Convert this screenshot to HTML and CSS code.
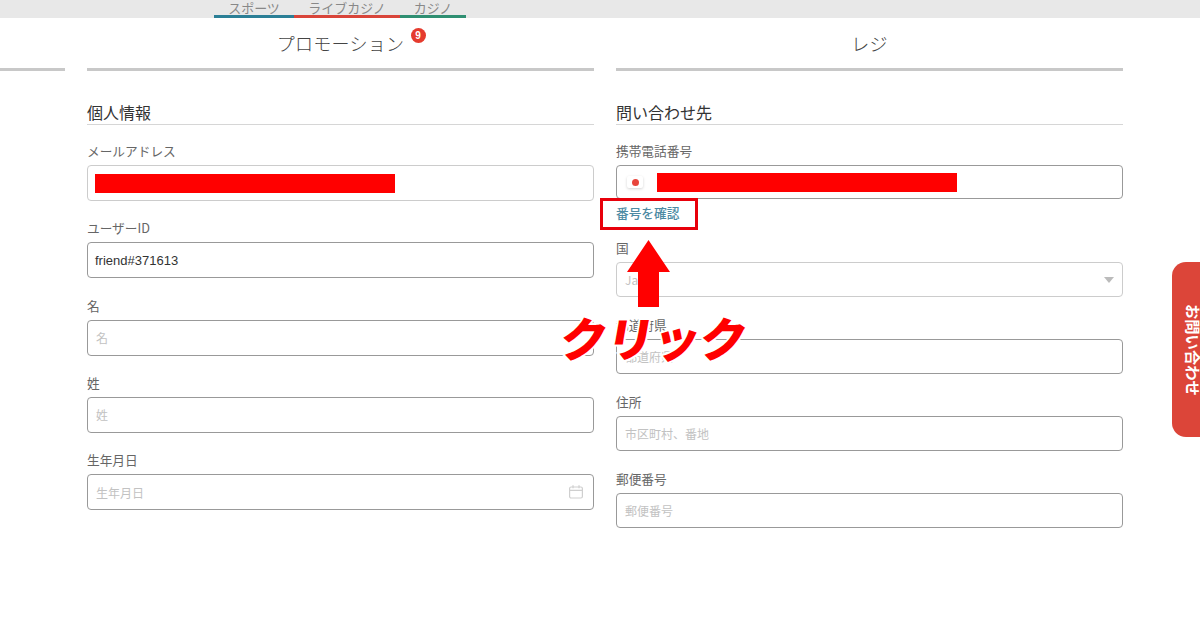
FILE: index.html
```
<!DOCTYPE html>
<html lang="ja">
<head>
<meta charset="utf-8">
<title>個人情報</title>
<link rel="stylesheet" href="styles.css">
</head>
<body>
<div class="topbar">
  <div class="tab tab-sports">スポーツ</div>
  <div class="tab tab-live">ライブカジノ</div>
  <div class="tab tab-casino">カジノ</div>
</div>
<main class="grid">
  <div class="stub"></div>
  <section class="col col-left">
    <h2 class="col-title"><span class="title-wrap">プロモーション<span class="badge">9</span></span></h2>
    <h3 class="sec-title">個人情報</h3>
    <div class="field">
      <label class="label">メールアドレス</label>
      <div class="input light"><span class="redact"></span></div>
    </div>
    <div class="field">
      <label class="label">ユーザーID</label>
      <div class="input value">friend#371613</div>
    </div>
    <div class="field">
      <label class="label">名</label>
      <div class="input ph">名</div>
    </div>
    <div class="field">
      <label class="label">姓</label>
      <div class="input ph">姓</div>
    </div>
    <div class="field">
      <label class="label">生年月日</label>
      <div class="input ph between">生年月日
        <svg class="cal" width="16" height="16" viewBox="0 0 16 16" fill="none" stroke="#cfcfcf" stroke-width="1.2"><rect x="1.6" y="3" width="12.8" height="11" rx="1.5"/><path d="M1.6 6.4h12.8M5 1.2v3M11 1.2v3"/></svg>
      </div>
    </div>
  </section>
  <section class="col col-right">
    <h2 class="col-title">レジ</h2>
    <h3 class="sec-title">問い合わせ先</h3>
    <div class="field phone">
      <label class="label">携帯電話番号</label>
      <div class="input">
        <span class="flag"><span class="sun"></span></span>
        <span class="redact"></span>
      </div>
      <a class="verify">番号を確認</a>
    </div>
    <div class="field">
      <label class="label">国</label>
      <div class="input light ph between">Japan<span class="caret"></span></div>
    </div>
    <div class="field">
      <label class="label">都道府県</label>
      <div class="input ph">都道府県</div>
    </div>
    <div class="field">
      <label class="label">住所</label>
      <div class="input ph">市区町村、番地</div>
    </div>
    <div class="field">
      <label class="label">郵便番号</label>
      <div class="input ph">郵便番号</div>
    </div>
  </section>
</main>
<aside class="side-tab"><span>お問い合わせ</span></aside>
<div class="note-box"></div>
<svg class="note-arrow" width="43" height="67" viewBox="0 0 43 67"><path d="M21.5 0L43 32H32V67H11V32H0Z" fill="#ff0000"/></svg>
<div class="note-text">クリック</div>
</body>
</html>
```
FILE: styles.css
```
* { box-sizing: border-box; }
html, body { margin: 0; padding: 0; }
body {
  width: 1200px;
  height: 630px;
  overflow: hidden;
  position: relative;
  background: #fff;
  font-family: "Noto Sans CJK JP", "Noto Sans", sans-serif;
  color: #666;
}
.topbar {
  height: 18px;
  background: #e8e8e8;
  display: flex;
  padding-left: 214px;
  overflow: hidden;
}
.tab {
  height: 18px;
  font-size: 13px;
  line-height: 15px;
  color: #888;
  text-align: center;
  border-bottom: 3px solid;
  overflow: hidden;
}
.tab-sports { width: 80px; border-color: #2b7f96; }
.tab-live { width: 106px; border-color: #d9453a; }
.tab-casino { width: 66px; border-color: #2f8f72; }
.grid {
  display: grid;
  grid-template-columns: 65px 507px 507px;
  column-gap: 22px;
}
.stub { height: 53px; border-bottom: 3px solid #c8c8c8; }
.col-title {
  margin: 0;
  height: 53px;
  border-bottom: 3px solid #c8c8c8;
  font-size: 18px;
  font-weight: 300;
  letter-spacing: 0.3px;
  line-height: 50px;
  text-align: center;
  color: #444;
}
.title-wrap { position: relative; display: inline-block; }
.badge {
  position: absolute;
  left: 134px;
  top: 10px;
  width: 15px;
  height: 15px;
  border-radius: 50%;
  background: #e53b2e;
  color: #fff;
  font: bold 10px/15px "Liberation Sans", sans-serif;
  letter-spacing: 0;
  text-align: center;
}
.sec-title {
  margin: 32px 0 0;
  height: 22px;
  font-size: 16px;
  font-weight: 400;
  line-height: 19px;
  color: #333;
  border-bottom: 1px solid #d6d6d6;
}
.col-left .field { margin-top: 17.25px; }
.col-right .field { margin-top: 18px; }
.col .sec-title + .field { margin-top: 16px; }
.col .phone + .field { margin-top: 16px; }
.label {
  display: block;
  height: 19px;
  margin-bottom: 5px;
  font-size: 12.7px;
  line-height: 19px;
  color: #666;
}
.input {
  height: 35px;
  padding: 0 8px;
  border: 1px solid #999;
  border-radius: 4px;
  display: flex;
  align-items: center;
  background: #fff;
  font-size: 12px;
}
.col-left .input { height: 36px; }
.input.light { border-color: #ccc; }
.input.value {
  padding-left: 7px;
  color: #333;
  font-family: "Liberation Sans", sans-serif;
  font-size: 13px;
}
.input.ph { color: #c2c2c2; }
.between { justify-content: space-between; }
.redact { display: block; width: 300px; height: 19px; background: #ff0000; }
.col-left .redact { margin-left: -1px; }
.cal { display: block; margin-right: 1px; }
.caret {
  width: 0;
  height: 0;
  border-left: 5px solid transparent;
  border-right: 5px solid transparent;
  border-top: 6px solid #bbb;
}
.phone .input { height: 34px; padding-left: 10px; }
.flag {
  width: 16px;
  height: 12px;
  margin-right: 14px;
  background: #fff;
  border-radius: 2px;
  box-shadow: 0 1px 3px #d4d4d4;
  display: flex;
  align-items: center;
  justify-content: center;
}
.sun { width: 7px; height: 7px; border-radius: 50%; background: #e8453c; }
.verify {
  display: block;
  margin-top: 5px;
  font-size: 12.7px;
  font-weight: 500;
  line-height: 18px;
  color: #4d8aa3;
}
.side-tab {
  position: absolute;
  left: 1172px;
  top: 262px;
  width: 28px;
  height: 175px;
  background: #dc4539;
  border-radius: 14px 0 0 14px;
  overflow: hidden;
  display: flex;
  align-items: center;
}
.side-tab span {
  writing-mode: vertical-rl;
  text-orientation: sideways;
  margin-left: 14px;
  font-size: 15.3px;
  font-weight: 700;
  line-height: 16px;
  color: #fff;
  white-space: nowrap;
}
.note-box {
  position: absolute;
  left: 600px;
  top: 198px;
  width: 98px;
  height: 32px;
  border: 3px solid #e8000b;
}
.note-arrow { position: absolute; left: 627px; top: 240px; }
.note-text {
  position: absolute;
  left: 561px;
  top: 303px;
  font-size: 47px;
  font-weight: 900;
  line-height: 68px;
  letter-spacing: -0.5px;
  color: #ff0000;
  transform: skewX(-10deg);
  -webkit-text-stroke: 4px #fff;
  paint-order: stroke fill;
  white-space: nowrap;
}
```
